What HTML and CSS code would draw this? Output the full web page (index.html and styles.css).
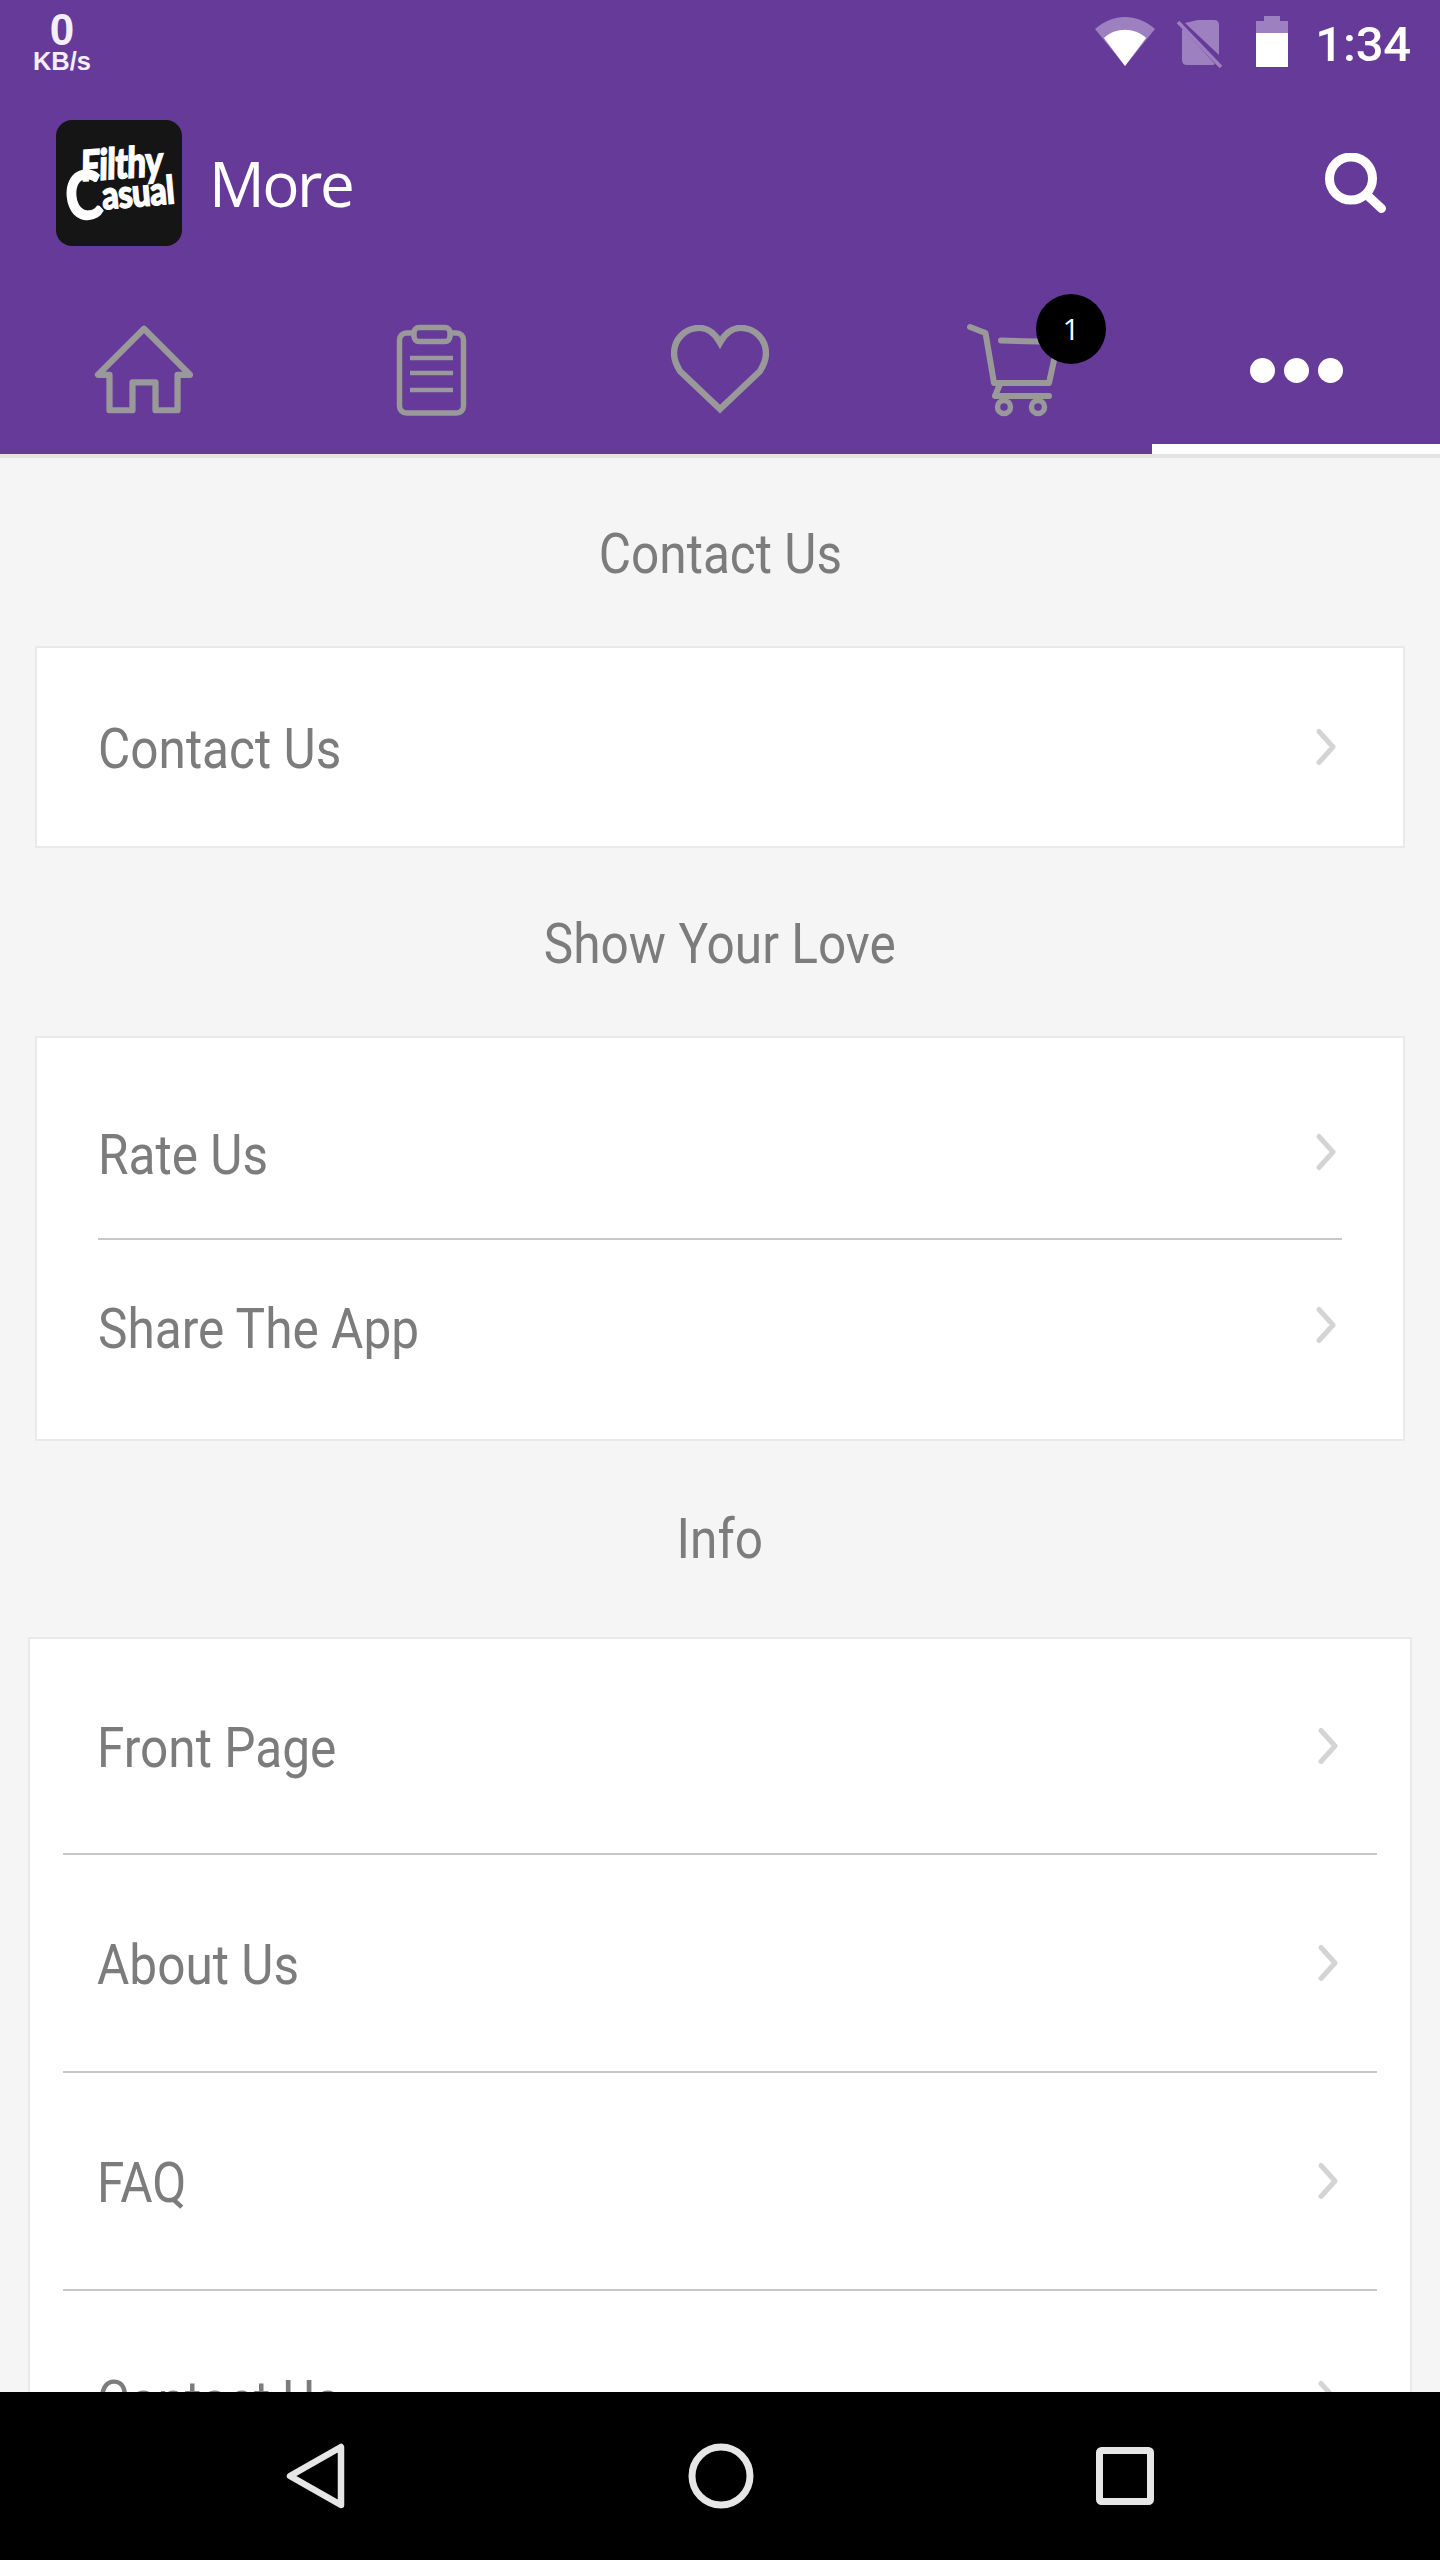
FILE: index.html
```html
<!DOCTYPE html>
<html lang="en">
<head>
<meta charset="utf-8">
<title>More</title>
<link rel="stylesheet" href="styles.css">
</head>
<body>
<div class="phone">
  <header class="appbar">
    <div class="status">
      <div class="speed"><span class="speed-num">0</span><span class="speed-unit">KB/s</span></div>
      <div class="status-right">
        <svg class="ic-wifi" width="64" height="50" viewBox="0 0 64 50"><path d="M2 12C20 -4 44 -4 62 12L32 49Z" fill="#9d80c0"/><path d="M11 21C22 10 42 10 53 21L32 49Z" fill="#fff"/></svg>
        <svg class="ic-sim" width="48" height="50" viewBox="0 0 48 50"><path d="M21 1H37Q42 1 42 6V36L8 4ZM6 10L38 45Q37 46 35 46H10Q5 46 5 41V11Z" fill="#9d80c0"/><path d="M1 3L44 48" stroke="#9d80c0" stroke-width="3.500"/></svg>
        <svg class="ic-bat" width="34" height="52" viewBox="0 0 34 52"><path d="M9 0H25V5H33V17H1V5H9Z" fill="#9d80c0"/><path d="M1 17H33V51H1Z" fill="#fff"/></svg>
        <span class="clock">1:34</span>
      </div>
    </div>
    <div class="toolbar">
      <div class="logo"><span class="logo-top">Filthy</span><span class="logo-bot"><span class="logo-cap">C</span>asual</span></div>
      <h1 class="title">More</h1>
      <svg class="ic-search" width="61" height="60" viewBox="0 0 61 60" fill="none" stroke="#fff" stroke-linecap="round"><circle cx="26" cy="25.500" r="21.500" stroke-width="9"/><path d="M42 42L56.500 55.500" stroke-width="9"/></svg>
    </div>
    <nav class="tabs">
      <div class="tab">
        <svg width="102" height="92" viewBox="0 0 106 96" fill="none" stroke="#999" stroke-width="6.500" stroke-linejoin="round" stroke-linecap="round"><path d="M53 5L5 53H17V90H41V61H65V90H88V53H101Z"/></svg>
      </div>
      <div class="tab">
        <svg width="72" height="92" viewBox="0 0 72 92" fill="none" stroke="#999" stroke-width="5.500"><rect x="3.500" y="9" width="64" height="80" rx="7"/><rect x="18" y="3.500" width="36" height="14" rx="5" fill="#663a99"/><path d="M14 34H57M14 49H57M14 66H57" stroke-width="4.500"/></svg>
      </div>
      <div class="tab">
        <svg width="98" height="90" viewBox="0 0 100 92" fill="none" stroke="#999" stroke-width="6.500" stroke-linejoin="miter"><path d="M50 18C45 9 38 3 29 3C15 3 3 14 3 29C3 36 6 42 9 47L50 86L91 47C94 42 97 36 97 29C97 14 85 3 71 3C62 3 55 9 50 18Z"/></svg>
      </div>
      <div class="tab">
        <svg class="ic-cart" width="100" height="96" viewBox="0 0 100 96" fill="none" stroke="#999" stroke-width="6" stroke-linecap="round" stroke-linejoin="round"><path d="M4 5L19.500 11L28 61H83L92 20L35 18.500M34 62L29 74H83"/><circle cx="38" cy="85" r="6.500" stroke-width="5.500"/><circle cx="72" cy="85" r="6.500" stroke-width="5.500"/></svg>
        <span class="badge">1</span>
      </div>
      <div class="tab tab-active">
        <span class="dot"></span><span class="dot"></span><span class="dot"></span>
      </div>
    </nav>
  </header>
  <main class="content">
    <h2 class="heading"><span class="narrow">Contact Us</span></h2>
    <section class="card">
      <div class="row row-single"><span class="narrow">Contact Us</span><svg class="chev" width="22" height="38" viewBox="0 0 22 38"><path d="M4 3.500L18 19L4 34.500"/></svg></div>
    </section>
    <h2 class="heading"><span class="narrow">Show Your Love</span></h2>
    <section class="card">
      <div class="row row-rate"><span class="narrow">Rate Us</span><svg class="chev" width="22" height="38" viewBox="0 0 22 38"><path d="M4 3.500L18 19L4 34.500"/></svg></div>
      <div class="row row-share"><span class="narrow">Share The App</span><svg class="chev" width="22" height="38" viewBox="0 0 22 38"><path d="M4 3.500L18 19L4 34.500"/></svg></div>
    </section>
    <h2 class="heading heading-info"><span class="narrow">Info</span></h2>
    <section class="card card-wide">
      <div class="row row-info row-first"><span class="narrow">Front Page</span><svg class="chev" width="22" height="38" viewBox="0 0 22 38"><path d="M4 3.500L18 19L4 34.500"/></svg></div>
      <div class="row row-info"><span class="narrow">About Us</span><svg class="chev" width="22" height="38" viewBox="0 0 22 38"><path d="M4 3.500L18 19L4 34.500"/></svg></div>
      <div class="row row-info"><span class="narrow">FAQ</span><svg class="chev" width="22" height="38" viewBox="0 0 22 38"><path d="M4 3.500L18 19L4 34.500"/></svg></div>
      <div class="row row-info"><span class="narrow">Contact Us</span><svg class="chev" width="22" height="38" viewBox="0 0 22 38"><path d="M4 3.500L18 19L4 34.500"/></svg></div>
    </section>
  </main>
  <footer class="navbar">
    <svg width="60" height="66" viewBox="0 0 60 66" fill="none" stroke="#e6e6e6" stroke-width="6.500" stroke-linejoin="round"><path d="M55 4V62L4 33Z"/></svg>
    <svg width="66" height="66" viewBox="0 0 66 66" fill="none" stroke="#e6e6e6" stroke-width="7"><circle cx="33" cy="33" r="29"/></svg>
    <svg width="58" height="58" viewBox="0 0 58 58" fill="none" stroke="#e6e6e6" stroke-width="7"><rect x="3.500" y="3.500" width="51" height="51" rx="2"/></svg>
  </footer>
</div>
</body>
</html>
```
FILE: styles.css
```css
* { box-sizing: border-box; }
html, body { margin: 0; padding: 0; }
body { width: 1440px; height: 2560px; overflow: hidden; font-family: Roboto, "Liberation Sans", sans-serif; background: #f5f5f5; }
.phone { width: 1440px; height: 2560px; display: flex; flex-direction: column; overflow: hidden; }

.appbar { height: 454px; flex: none; background: #663a99; color: #fff; display: flex; flex-direction: column; }
.status { height: 110px; flex: none; display: flex; justify-content: space-between; padding: 0 29px 0 32px; }
.speed { width: 60px; padding-top: 11px; display: flex; flex-direction: column; align-items: center; font-family: "Liberation Sans", sans-serif; font-weight: 700; color: #f4eefa; }
.speed-num { font-size: 44px; line-height: 38px; height: 38px; }
.speed-unit { font-size: 25.500px; line-height: 24px; height: 24px; }
.status-right { display: flex; align-items: flex-start; }
.ic-wifi { margin-top: 17px; }
.ic-sim { margin: 19px 0 0 20px; }
.ic-bat { margin: 16px 0 0 30px; }
.clock { font-size: 49px; line-height: 49px; margin-top: 20px; padding-left: 26px; font-weight: 500; letter-spacing: -.2px; }

.toolbar { height: 146px; flex: none; display: flex; align-items: center; padding: 0 54px 0 56px; }
.logo { width: 126px; height: 126px; flex: none; border-radius: 16px; background: #151515; display: flex; flex-direction: column; align-items: center; justify-content: center; font-family: Lato, sans-serif; font-weight: 900; color: #fff; line-height: 1; -webkit-text-stroke: 1.200px #fff; }
.logo-top { font-size: 34px; letter-spacing: -.5px; transform: rotate(-4deg) skewX(-5deg) scale(.98, 1.25); margin: -12px 0 0 6px; }
.logo-bot { font-size: 34px; letter-spacing: -.5px; transform: rotate(-5deg) scale(.96, 1.15); margin-top: -5px; }
.logo-cap { font-size: 58px; line-height: 34px; vertical-align: -7px; }
.title { flex: 1; margin: 0 0 0 27px; font-size: 62px; font-weight: 400; line-height: 1; letter-spacing: -2.500px; font-family: "Open Sans", Roboto, sans-serif; }
.ic-search { flex: none; }

.tabs { flex: 1; min-height: 0; display: grid; grid-template-columns: repeat(5, 288px); }
.tab { position: relative; display: flex; align-items: center; justify-content: center; padding-top: 30px; }
.ic-cart { margin-left: 16px; }
.tab-active { border-bottom: 10px solid #fff; gap: 9px; padding-top: 40px; }
.dot { width: 25px; height: 25px; border-radius: 50%; background: #fff; }
.badge { position: absolute; left: 172px; top: 38px; width: 70px; height: 70px; border-radius: 50%; background: #000; color: #fff; font-family: "Open Sans", sans-serif; font-size: 30px; line-height: 70px; text-align: center; }

.content { flex: 1; min-height: 0; overflow: hidden; border-top: 4px solid #e4e4e4; background: #f5f5f5; display: flex; flex-direction: column; align-items: center; }
.narrow { display: inline-block; padding-top: 4px; transform: scaleX(.885); white-space: nowrap; }
.heading { margin: 0; height: 188px; width: 100%; display: flex; justify-content: center; align-items: center; font-size: 56px; font-weight: 400; color: #7c7c7c; flex: none; }
.heading-info { height: 196px; padding-bottom: 4px; }
.card { flex: none; width: 1370px; background: #fff; border: 2px solid #e9e9e9; padding: 0 61px; }
.card-wide { width: 1384px; padding: 0 33px; }
.row { display: flex; justify-content: space-between; align-items: center; font-size: 56px; color: #7c7c7c; }
.row .narrow { transform-origin: left center; }
.row-single { height: 198px; }
.row-rate { height: 202px; padding-top: 30px; border-bottom: 2px solid #c8c8c8; }
.row-share { height: 199px; padding-bottom: 26px; }
.row-rate .chev, .row-share .chev { margin-bottom: 3px; }
.row-info { height: 218px; border-bottom: 2px solid #c8c8c8; padding: 0 33px 0 34px; flex: none; }
.row-first { height: 216px; }
.chev { flex: none; margin-right: 5px; }
.chev path { fill: none; stroke: #d4d4d4; stroke-width: 5; stroke-linecap: round; stroke-linejoin: round; }

.navbar { height: 168px; flex: none; background: #000; position: relative; z-index: 1; display: flex; justify-content: center; align-items: center; gap: 342px; }
```
